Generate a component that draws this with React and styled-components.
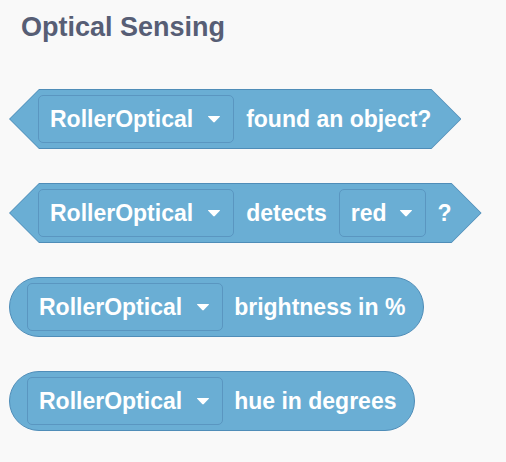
import React from 'react';
import styled, { createGlobalStyle } from 'styled-components';

const GlobalStyle = createGlobalStyle`
  body {
    margin: 0;
    background: #f9f9f9;
    font-family: 'Liberation Sans', Arial, sans-serif;
  }
`;

const FILL = '#6aaed4';
const EDGE = '#4f8db8';

const Page = styled.div`
  display: flex;
  flex-direction: column;
  align-items: flex-start;
  padding: 12px 0 0 9px;
`;

const Title = styled.h2`
  margin: 0 0 47px 12px;
  font-size: 27px;
  line-height: 30px;
  font-weight: bold;
  color: #575e75;
`;

const Stack = styled.div`
  display: flex;
  flex-direction: column;
  align-items: flex-start;
  gap: 34px;
`;

const hex = (p) => `polygon(${p}px 0, calc(100% - ${p}px) 0, 100% 50%, calc(100% - ${p}px) 100%, ${p}px 100%, 0 50%)`;

const HexBlock = styled.div`
  display: inline-flex;
  padding: 1px;
  background: ${EDGE};
  clip-path: ${hex(30)};
`;

const HexFill = styled.div`
  display: flex;
  align-items: center;
  gap: 12px;
  height: 58px;
  padding: 0 29px 0 28px;
  background: ${FILL};
  clip-path: ${hex(29)};
`;

const Reporter = styled.div`
  display: inline-flex;
  align-items: center;
  gap: 11px;
  height: 58px;
  padding: 0 18px 0 17px;
  background: ${FILL};
  border: 1px solid ${EDGE};
  border-radius: 30px;
`;

const Label = styled.span`
  color: #fff;
  font-size: 23px;
  font-weight: bold;
  white-space: nowrap;
`;

const Dropdown = styled.div`
  display: flex;
  align-items: center;
  gap: ${(p) => p.$gap || 14}px;
  height: 46px;
  padding: 0 12px 0 11px;
  border: 1px solid #5a96c0;
  border-radius: 5px;
  background: ${FILL};
`;

const Caret = () => (
  <svg width="14" height="8" viewBox="0 0 14 8">
    <path d="M1.5 1 H12.5 Q13.5 1 12.8 1.8 L7.8 7 Q7 7.8 6.2 7 L1.2 1.8 Q0.5 1 1.5 1 Z" fill="#fff" />
  </svg>
);

function Menu({ value, gap }) {
  return (
    <Dropdown $gap={gap}>
      <Label>{value}</Label>
      <Caret />
    </Dropdown>
  );
}

export default function App() {
  return (
    <>
      <GlobalStyle />
      <Page>
        <Title>Optical Sensing</Title>
        <Stack>
          <HexBlock>
            <HexFill>
              <Menu value="RollerOptical" />
              <Label>found an object?</Label>
            </HexFill>
          </HexBlock>
          <HexBlock>
            <HexFill>
              <Menu value="RollerOptical" />
              <Label>detects</Label>
              <Menu value="red" gap={12} />
              <Label>?</Label>
            </HexFill>
          </HexBlock>
          <Reporter>
            <Menu value="RollerOptical" />
            <Label>brightness in %</Label>
          </Reporter>
          <Reporter>
            <Menu value="RollerOptical" />
            <Label>hue in degrees</Label>
          </Reporter>
        </Stack>
      </Page>
    </>
  );
}
